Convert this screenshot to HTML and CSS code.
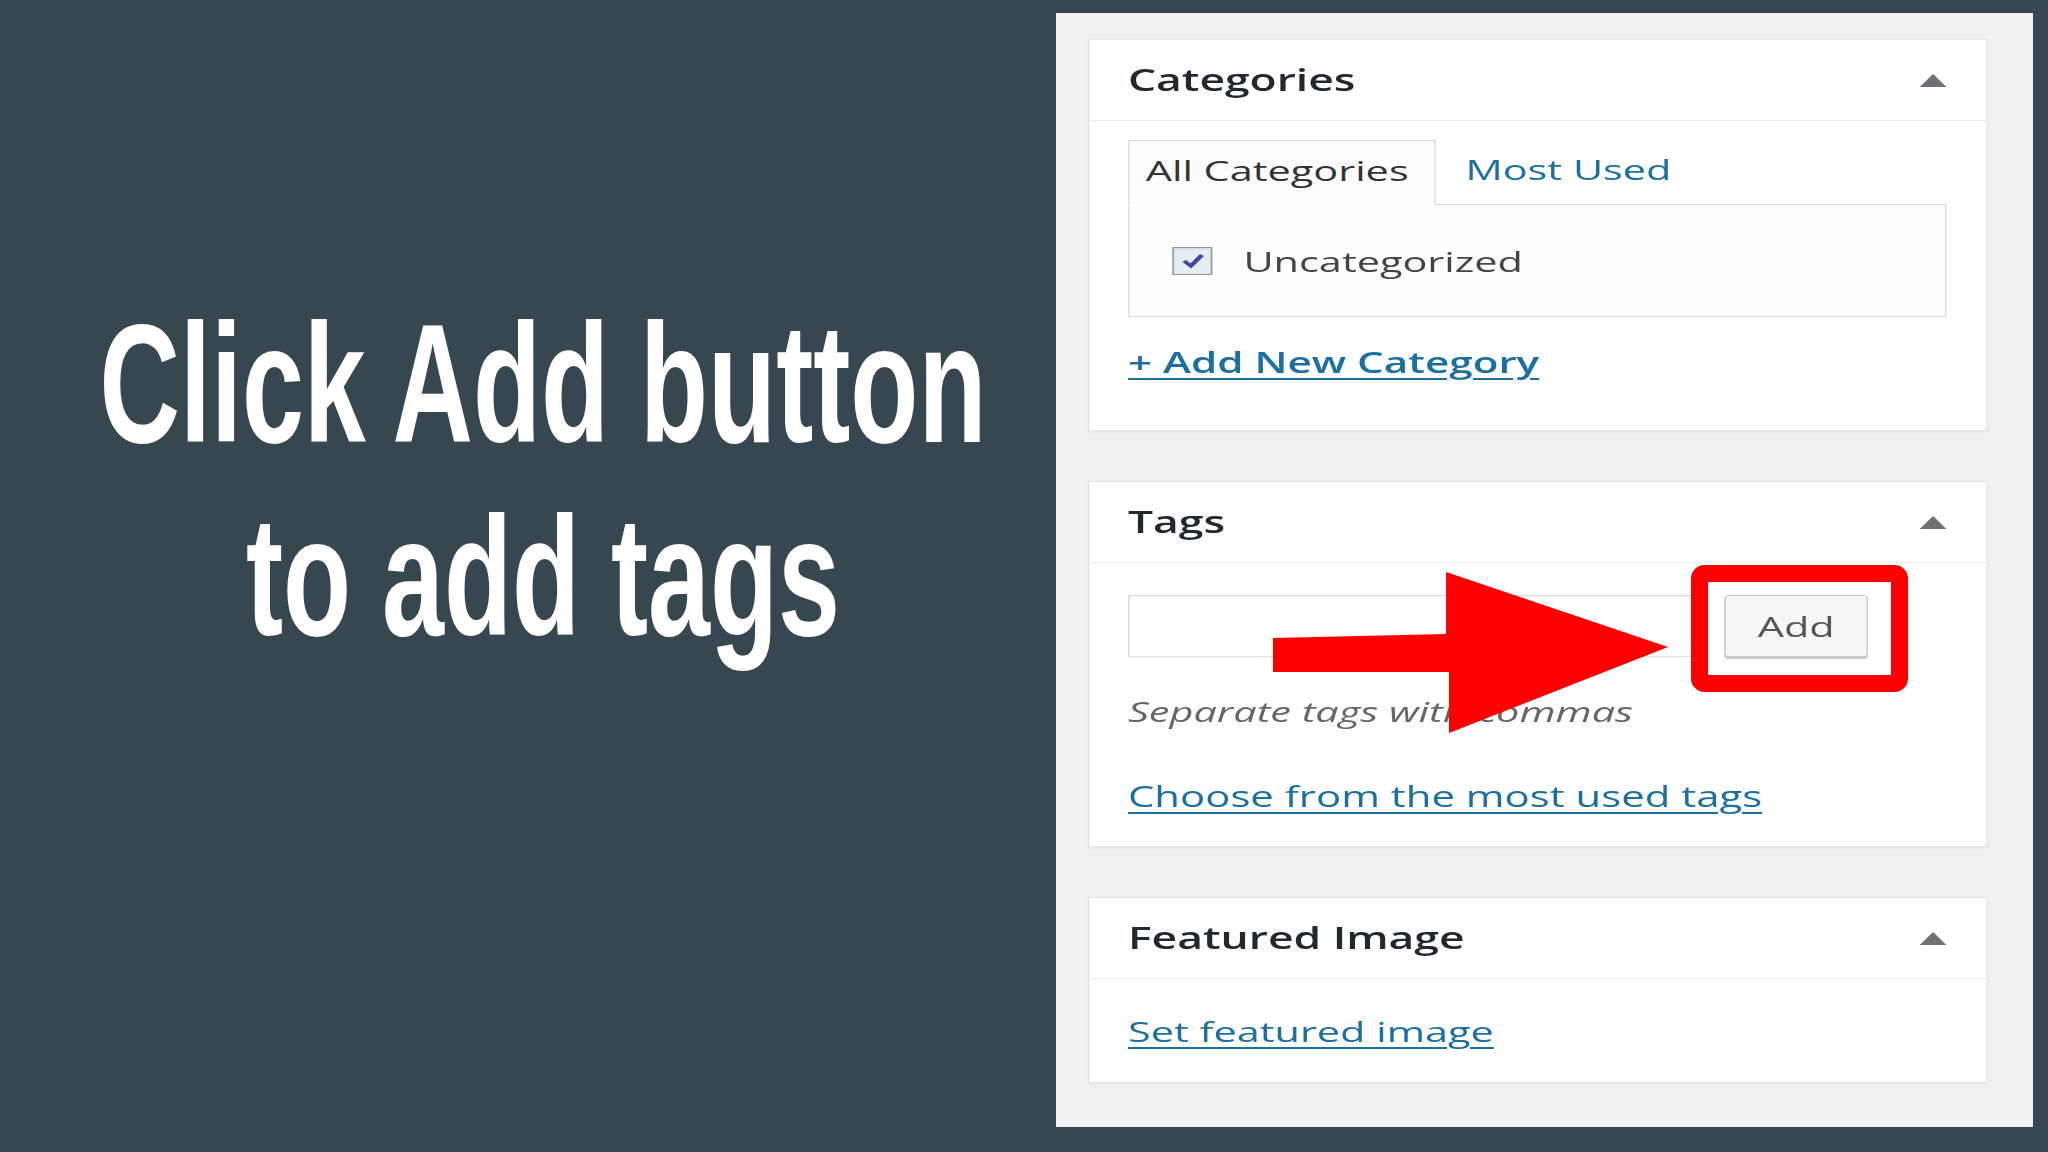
FILE: index.html
```html
<!DOCTYPE html>
<html>
<head>
    <title>Add tags</title>
    <link rel="stylesheet" href="styles.css">
</head>
<body>
    <div class="slide">
        <div class="caption">
            <div class="title">
                <span>Click Add button</span>
                <span>to add tags</span>
            </div>
        </div>

        <div class="panel">
            <div class="wp">
                <div class="box">
                    <div class="box-head">
                        <h2>Categories</h2>
                        <span class="toggle"></span>
                    </div>
                    <div class="box-body cat-body">
                        <div class="tabs">
                            <div class="tab active">All Categories</div>
                            <div class="tab"><a class="tab-link">Most Used</a></div>
                        </div>
                        <div class="cat-list">
                            <span class="check">
                                <svg viewBox="0 0 20 20" width="20" height="20"><path d="M4 10 L8.5 15 L16 4" fill="none" stroke="#3b49a3" stroke-width="3.2"/></svg>
                            </span>
                            <span class="cat-name">Uncategorized</span>
                        </div>
                        <a class="link add-cat">+ Add New Category</a>
                    </div>
                </div>

                <div class="box">
                    <div class="box-head">
                        <h2>Tags</h2>
                        <span class="toggle"></span>
                    </div>
                    <div class="box-body tags-body">
                        <div class="tag-row">
                            <input type="text" class="tag-input">
                            <button class="tag-btn">Add</button>
                        </div>
                        <p class="hint">Separate tags with commas</p>
                        <a class="link most-used">Choose from the most used tags</a>
                    </div>
                </div>

                <div class="box">
                    <div class="box-head">
                        <h2>Featured Image</h2>
                        <span class="toggle"></span>
                    </div>
                    <div class="box-body thumb-body">
                        <a class="link">Set featured image</a>
                    </div>
                </div>
            </div>

            <!-- red callout drawn over the screenshot -->
            <svg class="callout" viewBox="0 0 977 1114" width="977" height="1114">
                <polygon points="217,625 390,621 390,559 612,634 393,720 393,659 217,659" fill="#ff0000"/>
                <rect x="643.5" y="560.5" width="200" height="110" rx="5" fill="none" stroke="#ff0000" stroke-width="17"/>
            </svg>
        </div>
    </div>
</body>
</html>
```

FILE: styles.css
```css
*{
    box-sizing: border-box;
}

body{
    margin: 0;
    background-color: #37474f;
    overflow: hidden;
}

.slide{
    display: flex;
    width: 2048px;
    height: 1152px;
}

.caption{
    flex: none;
    width: 1056px;
    padding-top: 288px;
    padding-left: 30px;

    .title{
        display: flex;
        flex-direction: column;
        align-items: center;
        font-family: "Liberation Sans", sans-serif;
        font-weight: bold;
        font-size: 168px;
        line-height: 193px;
        color: #ffffff;
        white-space: nowrap;
        transform: scaleX(0.663);
    }
}

.panel{
    position: relative;
    flex: none;
    width: 977px;
    height: 1114px;
    margin-top: 13px;
    padding: 26px 0 0 32px;
    background-color: #f1f1f1;
}

/* the screenshot is stretched sideways, so the whole column is */
.wp{
    width: 608px;
    display: flex;
    flex-direction: column;
    gap: 50px;
    transform: scaleX(1.48);
    transform-origin: 0 0;
    font-family: "Open Sans", sans-serif;
    font-size: 28px;
    color: #444;
}

.box{
    background-color: #ffffff;
    border: 1px solid #e5e5e5;
    box-shadow: 0 1px 2px rgba(0,0,0,0.05);
}

.box-head{
    height: 81px;
    display: flex;
    align-items: center;
    justify-content: space-between;
    padding: 0 27px 0 26px;
    border-bottom: 1px solid #eeeeee;

    h2{
        margin: 0;
        font-size: 30px;
        font-weight: 600;
        line-height: 1;
        color: #23282d;
    }
}

.toggle{
    width: 0;
    height: 0;
    border-left: 9px solid transparent;
    border-right: 9px solid transparent;
    border-bottom: 13px solid #6d7176;
}

.box-body{
    padding: 0 27px 0 26px;
}

.link{
    display: block;
    line-height: 40px;
    color: #1b6fa3;
    text-decoration: underline;
    text-underline-offset: 5px;
}

.cat-body{
    padding-top: 19px;
    padding-bottom: 48px;
}

.tabs{
    display: flex;
    align-items: center;
    height: 64px;
}

.tab{
    height: 64px;
    display: flex;
    align-items: center;
    padding-bottom: 6px;
}

.tab.active{
    position: relative;
    width: 208px;
    height: 65px;
    margin-bottom: -1px;
    padding-left: 11px;
    border: 1px solid #dddddd;
    border-bottom: 0;
    background-color: #fdfdfd;
    color: #333;
}

.tab-link{
    margin-left: 20px;
    color: #1b6fa3;
}

.cat-list{
    height: 113px;
    display: flex;
    align-items: center;
    padding-left: 29px;
    border: 1px solid #dddddd;
    background-color: #fdfdfd;
}

.check{
    width: 27px;
    height: 28px;
    display: flex;
    align-items: center;
    justify-content: center;
    margin-right: 21px;
    border: 1px solid #8f959c;
    background-color: #e6ecf4;
    box-shadow: inset 0 1px 2px rgba(0,0,0,0.1);
}

.cat-name{
    color: #444;
}

.add-cat{
    margin-top: 25px;
    font-size: 28.5px;
    font-weight: 600;
    width: max-content;
}

.tags-body{
    padding-top: 32px;
    padding-bottom: 30px;
}

.tag-row{
    display: flex;
    align-items: flex-start;
}

.tag-input{
    width: 390px;
    height: 62px;
    border: 1px solid #dddddd;
    box-shadow: inset 0 1px 2px rgba(0,0,0,0.07);
    background-color: #ffffff;
}

.tag-btn{
    width: 97px;
    height: 62px;
    margin-left: 13px;
    border: 1px solid #cccccc;
    border-radius: 3px;
    background-color: #f7f7f7;
    box-shadow: 0 2px 0 #cccccc;
    font-family: "Open Sans", sans-serif;
    font-size: 28px;
    color: #555;
}

.hint{
    margin: 34px 0 0 0;
    line-height: 40px;
    font-style: italic;
    color: #666;
}

.most-used{
    margin-top: 45px;
    font-size: 28.3px;
    width: max-content;
}

.thumb-body{
    padding-top: 32px;
    padding-bottom: 31px;

    .link{
        width: max-content;
    }
}

.callout{
    position: absolute;
    left: 0;
    top: 0;
    pointer-events: none;
}
```
